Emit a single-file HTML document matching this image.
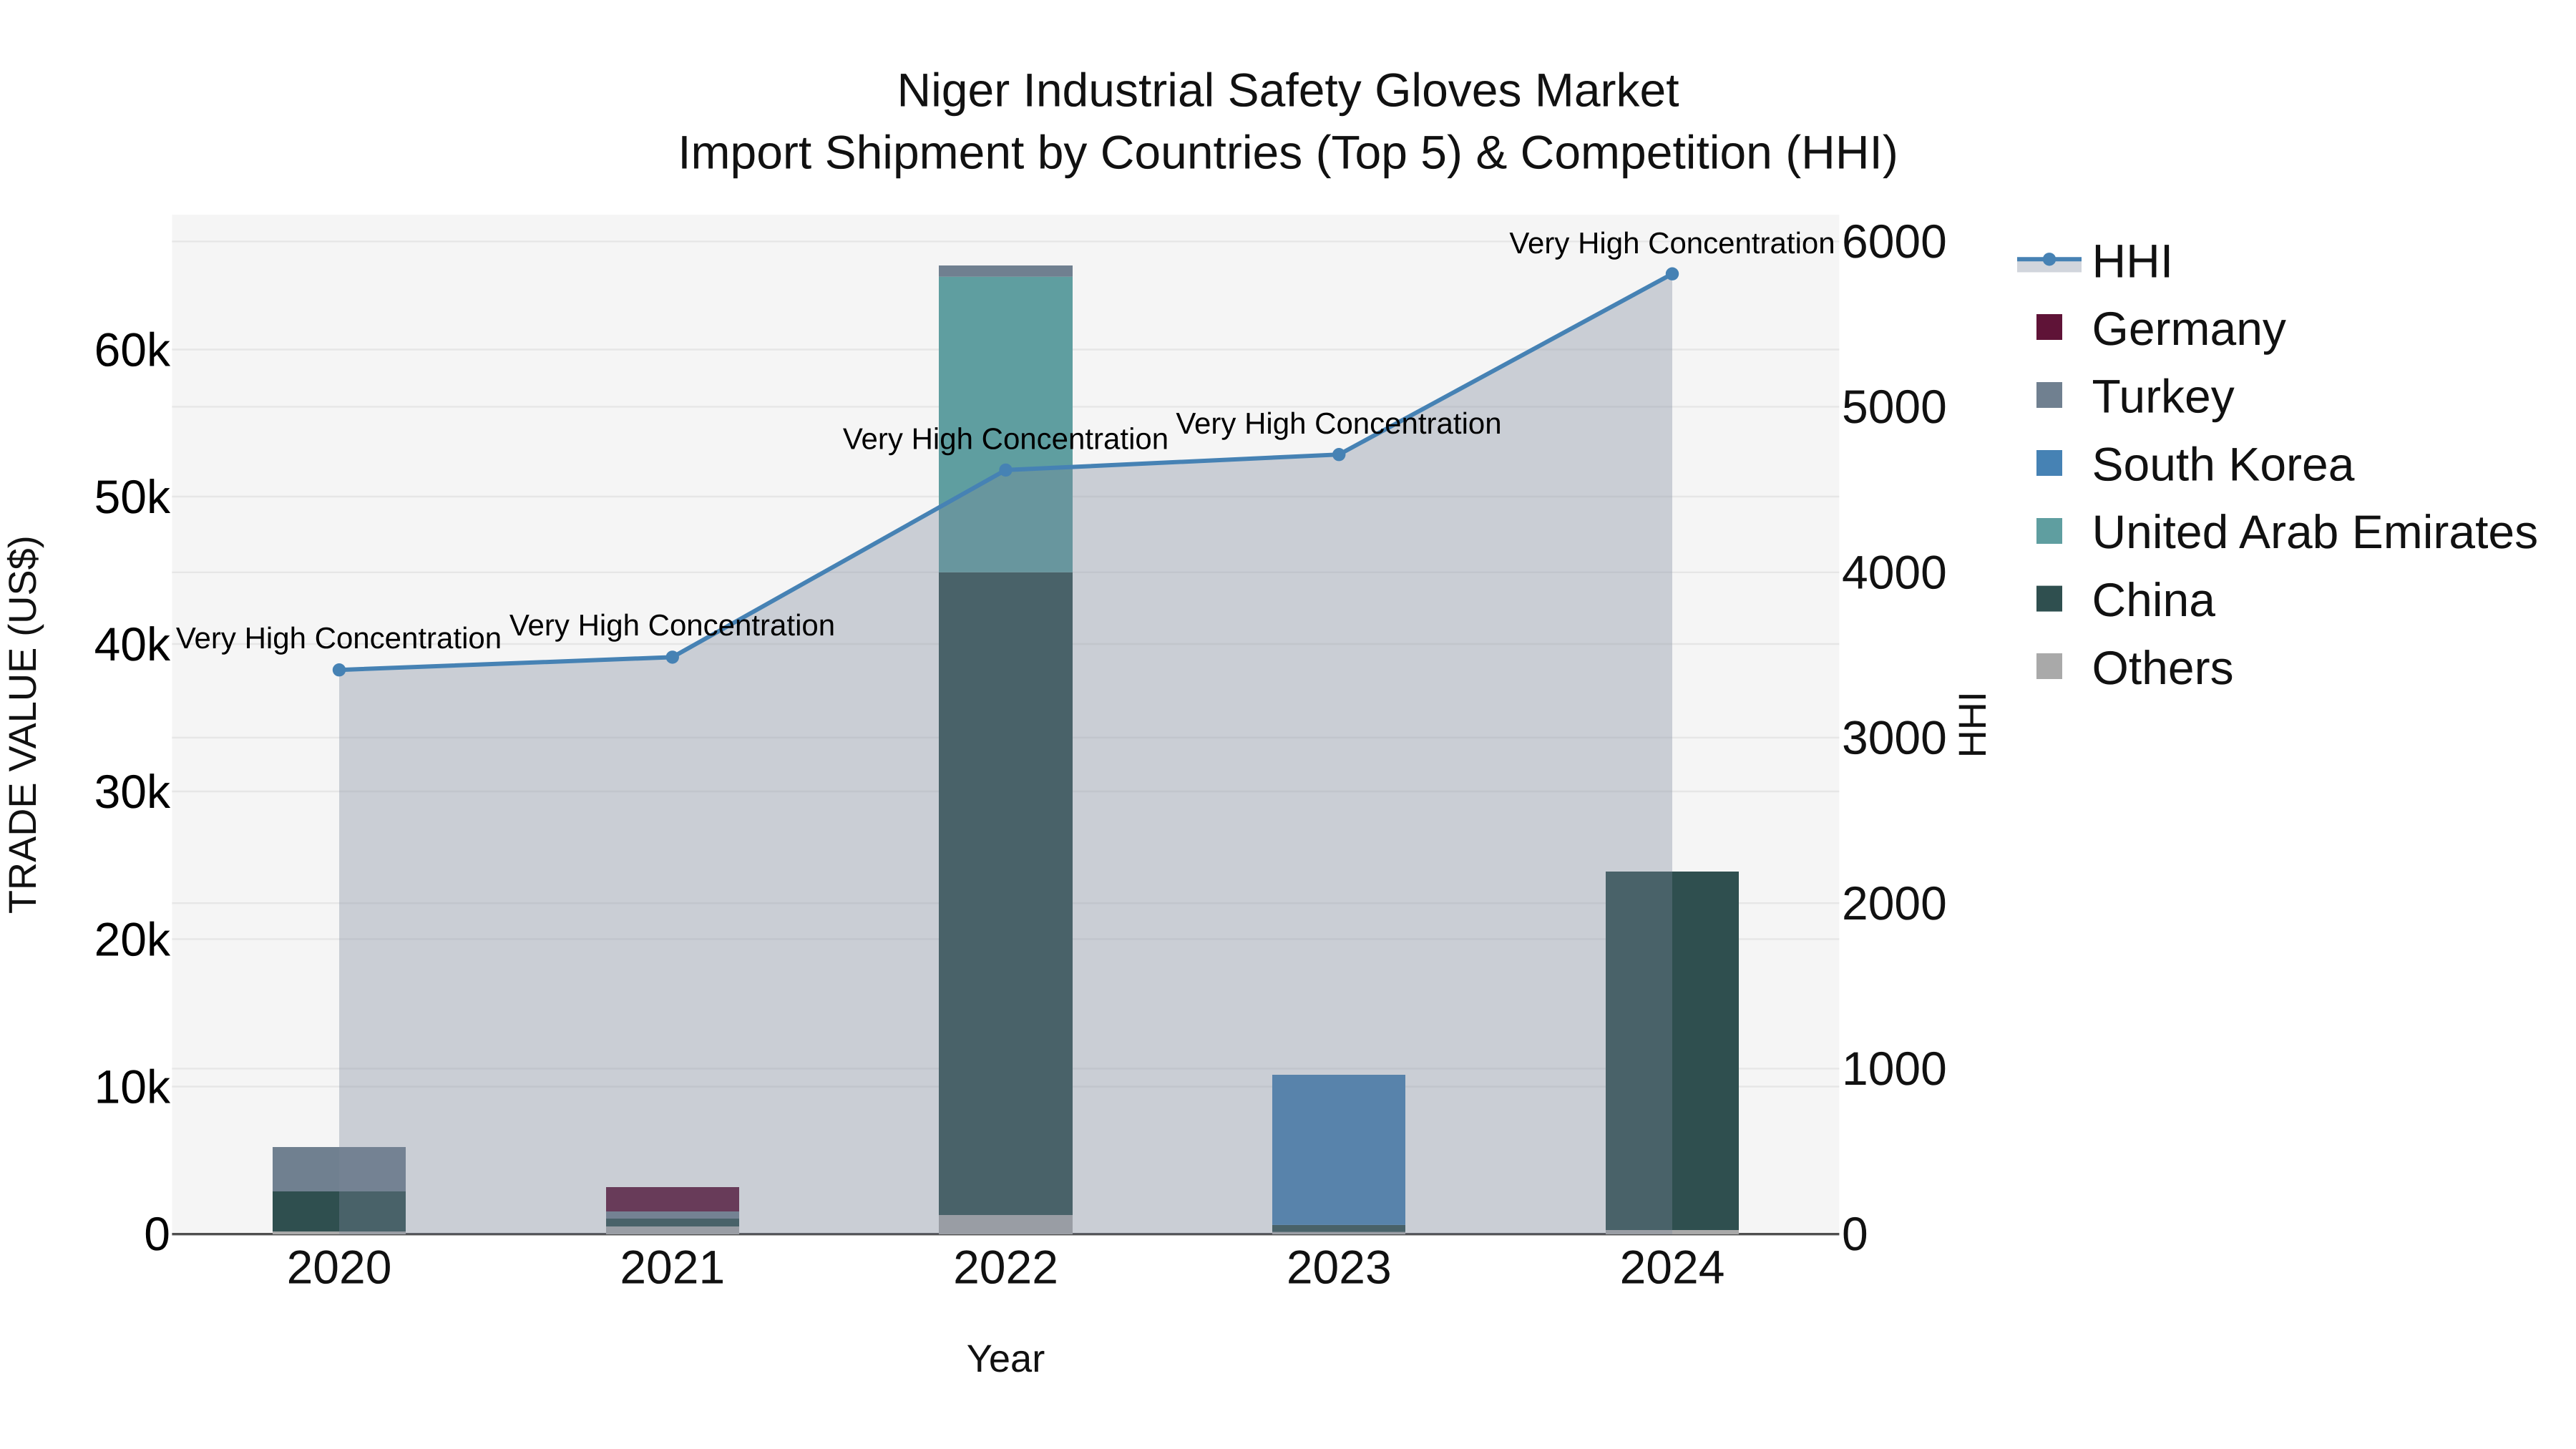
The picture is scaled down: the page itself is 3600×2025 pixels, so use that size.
<!DOCTYPE html>
<html lang="en">
<head>
<meta charset="utf-8">
<title>Niger Industrial Safety Gloves Market</title>
<style>
html,body{margin:0;padding:0;background:#fff;width:3600px;height:2025px;overflow:hidden}
svg{display:block}
text{font-family:"Liberation Sans",Arial,sans-serif;text-rendering:geometricPrecision}
.t{font-size:66px;fill:#111}
.k{font-size:66px;fill:#000}
.a{font-size:42px;fill:#000;text-anchor:middle}
.x{font-size:54.2px;fill:#111}
</style>
</head>
<body>
<svg width="3600" height="2025" viewBox="0 0 3600 2025" xmlns="http://www.w3.org/2000/svg">
<rect width="3600" height="2025" fill="#fff"/>
<rect x="240.4" y="300" width="2330" height="1424.6" fill="#f5f5f5"/>

<!-- grid -->
<g stroke="#e6e6e6" stroke-width="2.4">
<path d="M240.4 488.5H2570.4M240.4 694H2570.4M240.4 900H2570.4M240.4 1106H2570.4M240.4 1312.4H2570.4M240.4 1518.5H2570.4"/>
<path d="M240.4 337.4H2570.4M240.4 568.4H2570.4M240.4 799.8H2570.4M240.4 1030.8H2570.4M240.4 1262.2H2570.4M240.4 1493.4H2570.4"/>
</g>
<rect x="240.4" y="1723" width="2330" height="3.4" fill="#4f4f4f"/>

<!-- bars -->
<g>
<rect x="381" y="1721" width="186" height="4" fill="#a9a9a9"/>
<rect x="381" y="1665" width="186" height="56" fill="#2f4f4f"/>
<rect x="381" y="1603" width="186" height="62" fill="#708090"/>

<rect x="847" y="1714" width="186" height="11" fill="#a9a9a9"/>
<rect x="847" y="1703" width="186" height="11" fill="#2f4f4f"/>
<rect x="847" y="1693" width="186" height="10" fill="#708090"/>
<rect x="847" y="1659" width="186" height="34" fill="#5f1337"/>

<rect x="1312" y="1698" width="187" height="27" fill="#a9a9a9"/>
<rect x="1312" y="799.8" width="187" height="898.2" fill="#2f4f4f"/>
<rect x="1312" y="386.7" width="187" height="413.1" fill="#5f9ea0"/>
<rect x="1312" y="371" width="187" height="15.7" fill="#708090"/>

<rect x="1778" y="1721.7" width="186" height="3.3" fill="#a9a9a9"/>
<rect x="1778" y="1711.9" width="186" height="9.8" fill="#2f4f4f"/>
<rect x="1778" y="1502" width="186" height="209.9" fill="#4682b4"/>

<rect x="2244" y="1719" width="186" height="6" fill="#a9a9a9"/>
<rect x="2244" y="1218" width="186" height="501" fill="#2f4f4f"/>
</g>

<!-- HHI area + line -->
<path d="M474 936.2L939.75 918.4L1405.5 656.9L1871.25 635.2L2337 382.7L2337 1724.6L474 1724.6Z" fill="rgb(122,134,156)" fill-opacity="0.35"/>
<path d="M474 936.2L939.75 918.4L1405.5 656.9L1871.25 635.2L2337 382.7" fill="none" stroke="#4682b4" stroke-width="6"/>
<g fill="#4682b4">
<circle cx="474" cy="936.2" r="9.2"/>
<circle cx="939.75" cy="918.4" r="9.2"/>
<circle cx="1405.5" cy="656.9" r="9.2"/>
<circle cx="1871.25" cy="635.2" r="9.2"/>
<circle cx="2337" cy="382.7" r="9.2"/>
</g>

<!-- annotations -->
<text class="a" x="473.5" y="906">Very High Concentration</text>
<text class="a" x="939.5" y="888">Very High Concentration</text>
<text class="a" x="1405.5" y="627.5">Very High Concentration</text>
<text class="a" x="1871" y="606">Very High Concentration</text>
<text class="a" x="2337" y="354">Very High Concentration</text>

<!-- title -->
<text class="t" x="1800" y="148.5" text-anchor="middle">Niger Industrial Safety Gloves Market</text>
<text class="t" x="1800" y="235.5" text-anchor="middle">Import Shipment by Countries (Top 5) &amp; Competition (HHI)</text>

<!-- left ticks -->
<g text-anchor="end">
<text class="k" x="238" y="511.5">60k</text>
<text class="k" x="238" y="717">50k</text>
<text class="k" x="238" y="923">40k</text>
<text class="k" x="238" y="1129">30k</text>
<text class="k" x="238" y="1335.4">20k</text>
<text class="k" x="238" y="1541.5">10k</text>
<text class="k" x="238" y="1747">0</text>
</g>

<!-- right ticks -->
<text class="t" x="2574" y="360">6000</text>
<text class="t" x="2574" y="591">5000</text>
<text class="t" x="2574" y="822.4">4000</text>
<text class="t" x="2574" y="1053.4">3000</text>
<text class="t" x="2574" y="1284.8">2000</text>
<text class="t" x="2574" y="1516">1000</text>
<text class="t" x="2574" y="1747.2">0</text>

<!-- x ticks -->
<text class="t" x="474" y="1793.5" text-anchor="middle">2020</text>
<text class="t" x="939.75" y="1793.5" text-anchor="middle">2021</text>
<text class="t" x="1405.5" y="1793.5" text-anchor="middle">2022</text>
<text class="t" x="1871.25" y="1793.5" text-anchor="middle">2023</text>
<text class="t" x="2337" y="1793.5" text-anchor="middle">2024</text>

<!-- axis titles -->
<text class="x" x="1405.5" y="1917" text-anchor="middle">Year</text>
<text class="x" transform="translate(50 1012.7) rotate(-90)" text-anchor="middle">TRADE VALUE (US$)</text>
<text class="x" transform="translate(2775 1012.7) rotate(-90)" text-anchor="middle">HHI</text>

<!-- legend -->
<rect x="2819" y="360" width="90" height="20.5" fill="rgb(122,134,156)" fill-opacity="0.35"/>
<path d="M2819 362.3H2909" stroke="#4682b4" stroke-width="6"/>
<circle cx="2864" cy="362.3" r="9.2" fill="#4682b4"/>
<rect x="2846" y="439" width="36" height="36" fill="#5f1337"/>
<rect x="2846" y="534" width="36" height="36" fill="#708090"/>
<rect x="2846" y="629" width="36" height="36" fill="#4682b4"/>
<rect x="2846" y="724" width="36" height="36" fill="#5f9ea0"/>
<rect x="2846" y="818.6" width="36" height="36" fill="#2f4f4f"/>
<rect x="2846" y="913" width="36" height="36" fill="#a9a9a9"/>
<text class="t" x="2923.5" y="387.5">HHI</text>
<text class="t" x="2923.5" y="481.8">Germany</text>
<text class="t" x="2923.5" y="576.6">Turkey</text>
<text class="t" x="2923.5" y="671.4">South Korea</text>
<text class="t" x="2923.5" y="766.2">United Arab Emirates</text>
<text class="t" x="2923.5" y="861">China</text>
<text class="t" x="2923.5" y="955.8">Others</text>
</svg>
</body>
</html>
